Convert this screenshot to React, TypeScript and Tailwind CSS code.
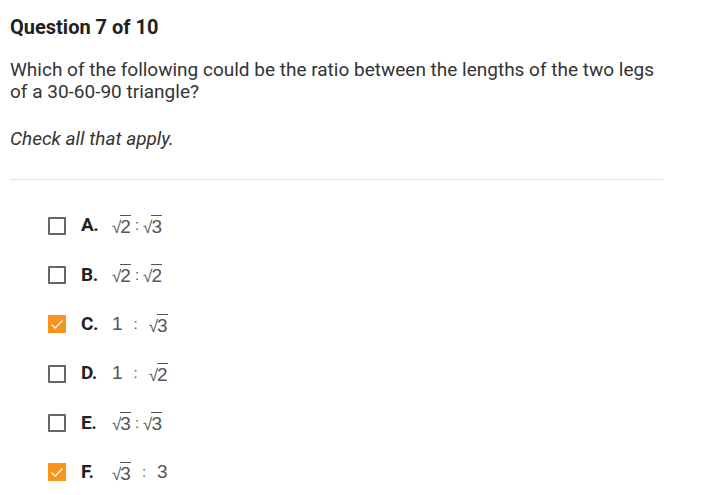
import React from 'react';

const Sqrt: React.FC<{ n: string }> = ({ n }) => (
    <span className="inline-flex items-end">
        <span className="text-[17px] leading-none">√</span>
        <span className="border-t border-[#555] leading-none pt-[1px] -ml-[1px] text-[19px]">{n}</span>
    </span>
);

interface OptionProps {
    letter: string;
    checked: boolean;
    children: React.ReactNode;
}

const Option: React.FC<OptionProps> = ({ letter, checked, children }) => (
    <div className="flex items-center h-[49.3px]">
        {checked ? (
            <div className="w-[18px] h-[18px] bg-[#f7941d] flex items-center justify-center">
                <svg width="14" height="11" viewBox="0 0 14 11" fill="none">
                    <path d="M1.5 5.5 L5.2 9 L12.5 1.5" stroke="#fff3e0" strokeWidth="1.5" />
                </svg>
            </div>
        ) : (
            <div className="w-[18px] h-[18px] border-2 border-[#666] rounded-[1px]" />
        )}
        <span className="ml-[15px] w-[31px] font-bold text-[19px] tracking-[-0.5px] text-[#222]">{letter}.</span>
        <span className="flex items-center gap-[3px] text-[19px] text-[#555] font-['Liberation_Sans',sans-serif]">
            {children}
        </span>
    </div>
);

const Colon = ({ wide }: { wide?: boolean }) => (
    <span className={wide ? 'mx-[8px] text-[15px]' : 'mx-[1px] text-[15px]'}>:</span>
);

export default function App() {
    return (
        <div className="w-[706px] h-[495px] bg-white font-['Roboto',sans-serif] text-[#222] overflow-hidden">
            <div className="pl-[10px] pr-[43px]">
                <h1 className="pt-[14px] text-[20px] leading-[26px] font-bold">Question 7 of 10</h1>
                <p className="mt-[19px] w-[665px] text-[19px] leading-[22px] text-[#333]">
                    Which of the following could be the ratio between the lengths of the two legs of a 30-60-90 triangle?
                </p>
                <p className="mt-[25px] text-[19px] leading-[22px] italic text-[#333]">Check all that apply.</p>
                <div className="mt-[29px] border-t border-[#e2e2e2]" />
                <div className="pl-[38px] pt-[21px]">
                    <Option letter="A" checked={false}><Sqrt n="2" /><Colon /><Sqrt n="3" /></Option>
                    <Option letter="B" checked={false}><Sqrt n="2" /><Colon /><Sqrt n="2" /></Option>
                    <Option letter="C" checked><span>1</span><Colon wide /><Sqrt n="3" /></Option>
                    <Option letter="D" checked={false}><span>1</span><Colon wide /><Sqrt n="2" /></Option>
                    <Option letter="E" checked={false}><Sqrt n="3" /><Colon /><Sqrt n="3" /></Option>
                    <Option letter="F" checked><Sqrt n="3" /><Colon wide /><span>3</span></Option>
                </div>
            </div>
        </div>
    );
}
